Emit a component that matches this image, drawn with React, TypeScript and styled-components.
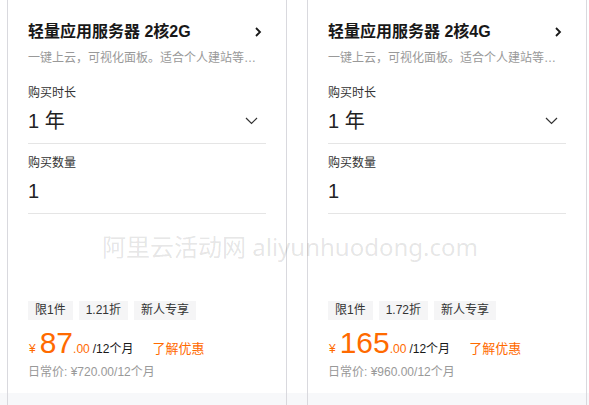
import React from "react";
import styled, { createGlobalStyle } from "styled-components";

const GlobalStyle = createGlobalStyle`
  html, body { margin: 0; padding: 0; background: #fff; }
  body {
    font-family: "Liberation Sans", "Noto Sans CJK SC", sans-serif;
    color: #333;
    overflow: hidden;
  }
`;

const Page = styled.div`
  position: relative;
  width: 589px;
  height: 405px;
  overflow: hidden;
`;

const Row = styled.div`
  display: flex;
  gap: 20px;
  padding-left: 7px;
  background: linear-gradient(#fff 393px, #f7f8fa 393px);
  height: 420px;
`;

const Card = styled.div`
  width: 278px;
  border-left: 1px solid #d9d9de;
  border-right: 1px solid #d9d9de;
  display: flex;
  flex-direction: column;
`;

const Body = styled.div`
  height: 393px;
  box-sizing: border-box;
  background: #fff;
  padding: 22px 20px 12px;
  display: flex;
  flex-direction: column;
`;

const Footer = styled.div`
  flex: 1;
  background: #f7f8fa;
`;

const TitleRow = styled.div`
  display: flex;
  align-items: center;
  justify-content: space-between;
  height: 20px;
`;

const Title = styled.div`
  font-size: 16px;
  line-height: 20px;
  font-weight: 700;
  color: #181818;
`;

const Subtitle = styled.div`
  margin-top: 7px;
  font-size: 12px;
  line-height: 18px;
  color: #999;
  white-space: nowrap;
`;

const Field = styled.div<{ $first?: boolean }>`
  margin-top: ${(p) => (p.$first ? "17px" : "10px")};
  padding-bottom: 8px;
  border-bottom: 1px solid #e5e5e5;
`;

const Label = styled.div`
  font-size: 12px;
  line-height: 18px;
  color: #333;
`;

const ValueRow = styled.div`
  margin-top: 5px;
  display: flex;
  align-items: center;
  justify-content: space-between;
  height: 28px;
`;

const Value = styled.div`
  font-size: 20px;
  line-height: 28px;
  color: #222;
`;

const Promo = styled.div`
  margin-top: auto;
  display: flex;
  flex-direction: column;
`;

const Tags = styled.div`
  display: flex;
  gap: 6px;
`;

const Tag = styled.span`
  padding: 0 7px;
  height: 19px;
  line-height: 19px;
  font-size: 12px;
  color: #333;
  background: #f5f5f6;
`;

const PriceRow = styled.div`
  margin-top: 8px;
  display: flex;
  align-items: baseline;
  height: 30px;
`;

const Yen = styled.span`
  font-size: 12px;
  line-height: 18px;
  color: #ff6a00;
  margin-left: 1px;
  margin-right: 4px;
`;

const Big = styled.span`
  font-size: 30px;
  line-height: 30px;
  color: #ff6a00;
`;

const Decimal = styled.span`
  font-size: 12px;
  line-height: 18px;
  color: #ff6a00;
  margin-right: 3px;
`;

const Unit = styled.span`
  font-size: 12px;
  line-height: 18px;
  color: #181818;
`;

const Learn = styled.span`
  margin-left: 19px;
  font-size: 13px;
  line-height: 18px;
  color: #ff6a00;
`;

const Regular = styled.div`
  margin-top: 5px;
  font-size: 12px;
  line-height: 18px;
  color: #999;
`;

const Watermark = styled.div`
  position: absolute;
  left: 102px;
  top: 231px;
  font-family: "Noto Sans", "Noto Sans CJK SC", sans-serif;
  font-size: 24px;
  line-height: 32px;
  color: rgba(0, 0, 0, 0.11);
  white-space: nowrap;
  pointer-events: none;
`;

const ChevronRight = () => (
  <svg width="8" height="10" viewBox="0 0 8 10" style={{ marginRight: 4 }}>
    <path d="M2 1 L6 5 L2 9" fill="none" stroke="#181818" strokeWidth="1.8" />
  </svg>
);

const ChevronDown = () => (
  <svg width="13" height="8" viewBox="0 0 13 8" style={{ marginRight: 8 }}>
    <path d="M1 1 L6.5 6.5 L12 1" fill="none" stroke="#333" strokeWidth="1.2" />
  </svg>
);

type Plan = {
  spec: string;
  discount: string;
  price: string;
  regular: string;
};

const plans: Plan[] = [
  { spec: "2核2G", discount: "1.21折", price: "87", regular: "720.00" },
  { spec: "2核4G", discount: "1.72折", price: "165", regular: "960.00" },
];

const PlanCard = ({ plan }: { plan: Plan }) => (
  <Card>
    <Body>
      <TitleRow>
        <Title>轻量应用服务器 {plan.spec}</Title>
        <ChevronRight />
      </TitleRow>
      <Subtitle>一键上云，可视化面板。适合个人建站等…</Subtitle>
      <Field $first>
        <Label>购买时长</Label>
        <ValueRow>
          <Value>1 年</Value>
          <ChevronDown />
        </ValueRow>
      </Field>
      <Field>
        <Label>购买数量</Label>
        <ValueRow>
          <Value>1</Value>
        </ValueRow>
      </Field>
      <Promo>
        <Tags>
          <Tag>限1件</Tag>
          <Tag>{plan.discount}</Tag>
          <Tag>新人专享</Tag>
        </Tags>
        <PriceRow>
          <Yen>¥</Yen>
          <Big>{plan.price}</Big>
          <Decimal>.00</Decimal>
          <Unit>/12个月</Unit>
          <Learn>了解优惠</Learn>
        </PriceRow>
        <Regular>日常价: ¥{plan.regular}/12个月</Regular>
      </Promo>
    </Body>
    <Footer />
  </Card>
);

export default function App() {
  return (
    <Page>
      <GlobalStyle />
      <Row>
        {plans.map((p) => (
          <PlanCard key={p.spec} plan={p} />
        ))}
      </Row>
      <Watermark>阿里云活动网 aliyunhuodong.com</Watermark>
    </Page>
  );
}
